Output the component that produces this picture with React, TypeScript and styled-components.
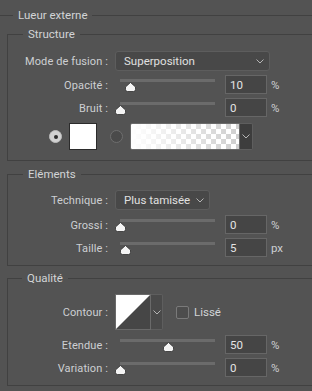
import React from 'react';
import styled, { createGlobalStyle } from 'styled-components';

const GlobalStyle = createGlobalStyle`
  html, body {
    margin: 0;
    padding: 0;
    background: #535353;
  }
  body {
    width: 312px;
    height: 391px;
    overflow: hidden;
    font-family: Roboto, "Open Sans", sans-serif;
    font-size: 11.5px;
    color: #cdcfd2;
  }
`;

const LINE = '#414141';

const Panel = styled.fieldset`
  margin: 7px 0 0 0;
  padding: 0;
  min-width: 0;
  border: none;
  border-top: 1px solid ${LINE};
`;

const Legend = styled.legend<{ $offset: number }>`
  margin-left: ${(p) => p.$offset}px;
  padding: 0 5px;
  line-height: 16px;
  color: #d2d4d6;
`;

const Group = styled.fieldset<{ $top: number; $bottom: number }>`
  margin: ${(p) => p.$top}px 0 0 7px;
  padding: 0 0 ${(p) => p.$bottom}px 0;
  min-width: 0;
  border: 1px solid ${LINE};
  border-right: none;
`;

const Row = styled.div<{ $top: number; $h: number }>`
  display: grid;
  grid-template-columns: 100px 1fr;
  column-gap: 7px;
  align-items: center;
  height: ${(p) => p.$h}px;
  margin-top: ${(p) => p.$top}px;
`;

const Label = styled.div<{ $shift?: number }>`
  text-align: right;
  white-space: nowrap;
  font-size: 11px;
  letter-spacing: 0.1px;
  padding-top: ${(p) => p.$shift ?? 0}px;
`;

const Controls = styled.div`
  display: flex;
  align-items: center;
  height: 100%;
`;

const Select = styled.div<{ $w: number }>`
  box-sizing: border-box;
  width: ${(p) => p.$w}px;
  height: 20px;
  display: flex;
  align-items: center;
  justify-content: space-between;
  padding: 0 5px 0 8px;
  background: #484848;
  border: 1px solid #5d5d5d;
  border-radius: 3px;
  color: #e0e0e0;
`;

const Chevron = ({ color = '#b5b5b5' }: { color?: string }) => (
  <svg width="8" height="5" viewBox="0 0 8 5">
    <path d="M0.5 0.5 L4 4 L7.5 0.5" fill="none" stroke={color} strokeWidth="1" />
  </svg>
);

const SliderBox = styled.div`
  position: relative;
  width: 105px;
  height: 19px;
  align-self: flex-start;
`;

const Track = styled.div`
  margin: 4px 5px 0;
  height: 3px;
  background: #6b6b6b;
`;

const Thumb = styled.svg`
  position: absolute;
  top: 7px;
`;

const NumberBox = styled.div`
  box-sizing: border-box;
  width: 42px;
  height: 19px;
  margin-left: 5px;
  padding-left: 4px;
  display: flex;
  align-items: center;
  background: #454545;
  border: 1px solid #666666;
  color: #e4e4e4;
`;

const Unit = styled.span`
  margin-left: 4px;
  color: #cdcfd2;
`;

const Slider = ({ value }: { value: number }) => (
  <SliderBox>
    <Track />
    <Thumb width="11" height="10" viewBox="0 0 11 10" style={{ left: Math.round((value / 100) * 95) }}>
      <path
        d="M5.5 0.5 L10.5 5 V7.5 Q10.5 9.5 8.5 9.5 H2.5 Q0.5 9.5 0.5 7.5 V5 Z"
        fill="#f4f4f4"
        stroke="#2e2e2e"
        strokeWidth="0.8"
      />
    </Thumb>
  </SliderBox>
);

const SliderRow = ({ label, value, unit, top }: { label: string; value: number; unit: string; top: number }) => (
  <Row $top={top} $h={19}>
    <Label $shift={2}>{label}</Label>
    <Controls>
      <Slider value={value} />
      <NumberBox>{value}</NumberBox>
      <Unit>{unit}</Unit>
    </Controls>
  </Row>
);

const ColorRow = styled.div`
  display: flex;
  align-items: center;
  height: 27px;
  margin-top: 6px;
  padding-left: 41px;
`;

const Radio = styled.div<{ $on?: boolean }>`
  box-sizing: border-box;
  width: 13px;
  height: 13px;
  border-radius: 50%;
  display: flex;
  align-items: center;
  justify-content: center;
  background: ${(p) => (p.$on ? '#d2d2d2' : '#4a4a4a')};
  border: 1px solid ${(p) => (p.$on ? '#bdbdbd' : '#6e6e6e')};
  &::after {
    content: '';
    display: ${(p) => (p.$on ? 'block' : 'none')};
    width: 4px;
    height: 4px;
    border-radius: 50%;
    background: #2d2d2d;
  }
`;

const Swatch = styled.div`
  box-sizing: border-box;
  width: 28px;
  height: 27px;
  margin-left: 7px;
  background: #ffffff;
  border: 1px solid #2b2b2b;
`;

const GradientPicker = styled.div`
  display: flex;
  height: 27px;
  margin-left: 7px;
`;

const GradientSwatch = styled.div`
  box-sizing: border-box;
  width: 110px;
  height: 27px;
  border: 1px solid #6a6a6a;
  border-radius: 2px 0 0 2px;
  background:
    linear-gradient(to right, #ffffff 0%, rgba(255, 255, 255, 0) 100%),
    conic-gradient(#cfcfcf 25%, #ffffff 0 50%, #cfcfcf 0 75%, #ffffff 0) 0 0 / 10px 10px;
`;

const DropButton = styled.div<{ $w: number; $bg?: string }>`
  box-sizing: border-box;
  width: ${(p) => p.$w}px;
  height: 100%;
  display: flex;
  align-items: center;
  justify-content: center;
  background: ${(p) => p.$bg ?? '#3d3d3d'};
  border: 1px solid #5e5e5e;
  border-left: none;
  border-radius: 0 2px 2px 0;
`;

const ContourPicker = styled.div`
  display: flex;
  height: 36px;
`;

const ContourSwatch = styled.svg`
  display: block;
  border: 1px solid #6a6a6a;
`;

const Check = styled.div`
  box-sizing: border-box;
  width: 13px;
  height: 13px;
  margin-left: 13px;
  border: 1px solid #7a7a7a;
  border-radius: 2px;
  background: #4d4d4d;
`;

const CheckLabel = styled.span`
  margin-left: 5px;
  font-size: 11.5px;
  color: #d2d4d6;
`;

const BottomLine = styled.div`
  margin: 5px 0 0 7px;
  border-top: 1px solid ${LINE};
`;

export default function App() {
  return (
    <>
      <GlobalStyle />
      <Panel>
        <Legend $offset={13}>Lueur externe</Legend>

        <Group $top={3} $bottom={10}>
          <Legend $offset={15}>Structure</Legend>
          <Row $top={9} $h={20}>
            <Label>Mode de fusion :</Label>
            <Controls>
              <Select $w={155}>
                <span>Superposition</span>
                <Chevron />
              </Select>
            </Controls>
          </Row>
          <SliderRow label="Opacité :" value={10} unit="%" top={4} />
          <SliderRow label="Bruit :" value={0} unit="%" top={4} />
          <ColorRow>
            <Radio $on />
            <Swatch />
            <Radio style={{ marginLeft: 13 }} />
            <GradientPicker>
              <GradientSwatch />
              <DropButton $w={13}>
                <Chevron />
              </DropButton>
            </GradientPicker>
          </ColorRow>
        </Group>

        <Group $top={5} $bottom={8}>
          <Legend $offset={15}>Eléments</Legend>
          <Row $top={8} $h={20}>
            <Label>Technique :</Label>
            <Controls>
              <Select $w={95}>
                <span>Plus tamisée</span>
                <Chevron />
              </Select>
            </Controls>
          </Row>
          <SliderRow label="Grossi :" value={0} unit="%" top={5} />
          <SliderRow label="Taille :" value={5} unit="px" top={4} />
        </Group>

        <Group $top={4} $bottom={8}>
          <Legend $offset={14}>Qualité</Legend>
          <Row $top={8} $h={36}>
            <Label>Contour :</Label>
            <Controls>
              <ContourPicker>
                <ContourSwatch width="34" height="34" viewBox="0 0 34 34">
                  <rect width="34" height="34" fill="#464646" />
                  <path d="M0 0 H34 L0 34 Z" fill="#ffffff" />
                </ContourSwatch>
                <DropButton $w={12} $bg="#4a4a4a">
                  <Chevron />
                </DropButton>
              </ContourPicker>
              <Check />
              <CheckLabel>Lissé</CheckLabel>
            </Controls>
          </Row>
          <SliderRow label="Etendue :" value={50} unit="%" top={5} />
          <SliderRow label="Variation :" value={0} unit="%" top={4} />
        </Group>

        <BottomLine />
      </Panel>
    </>
  );
}
